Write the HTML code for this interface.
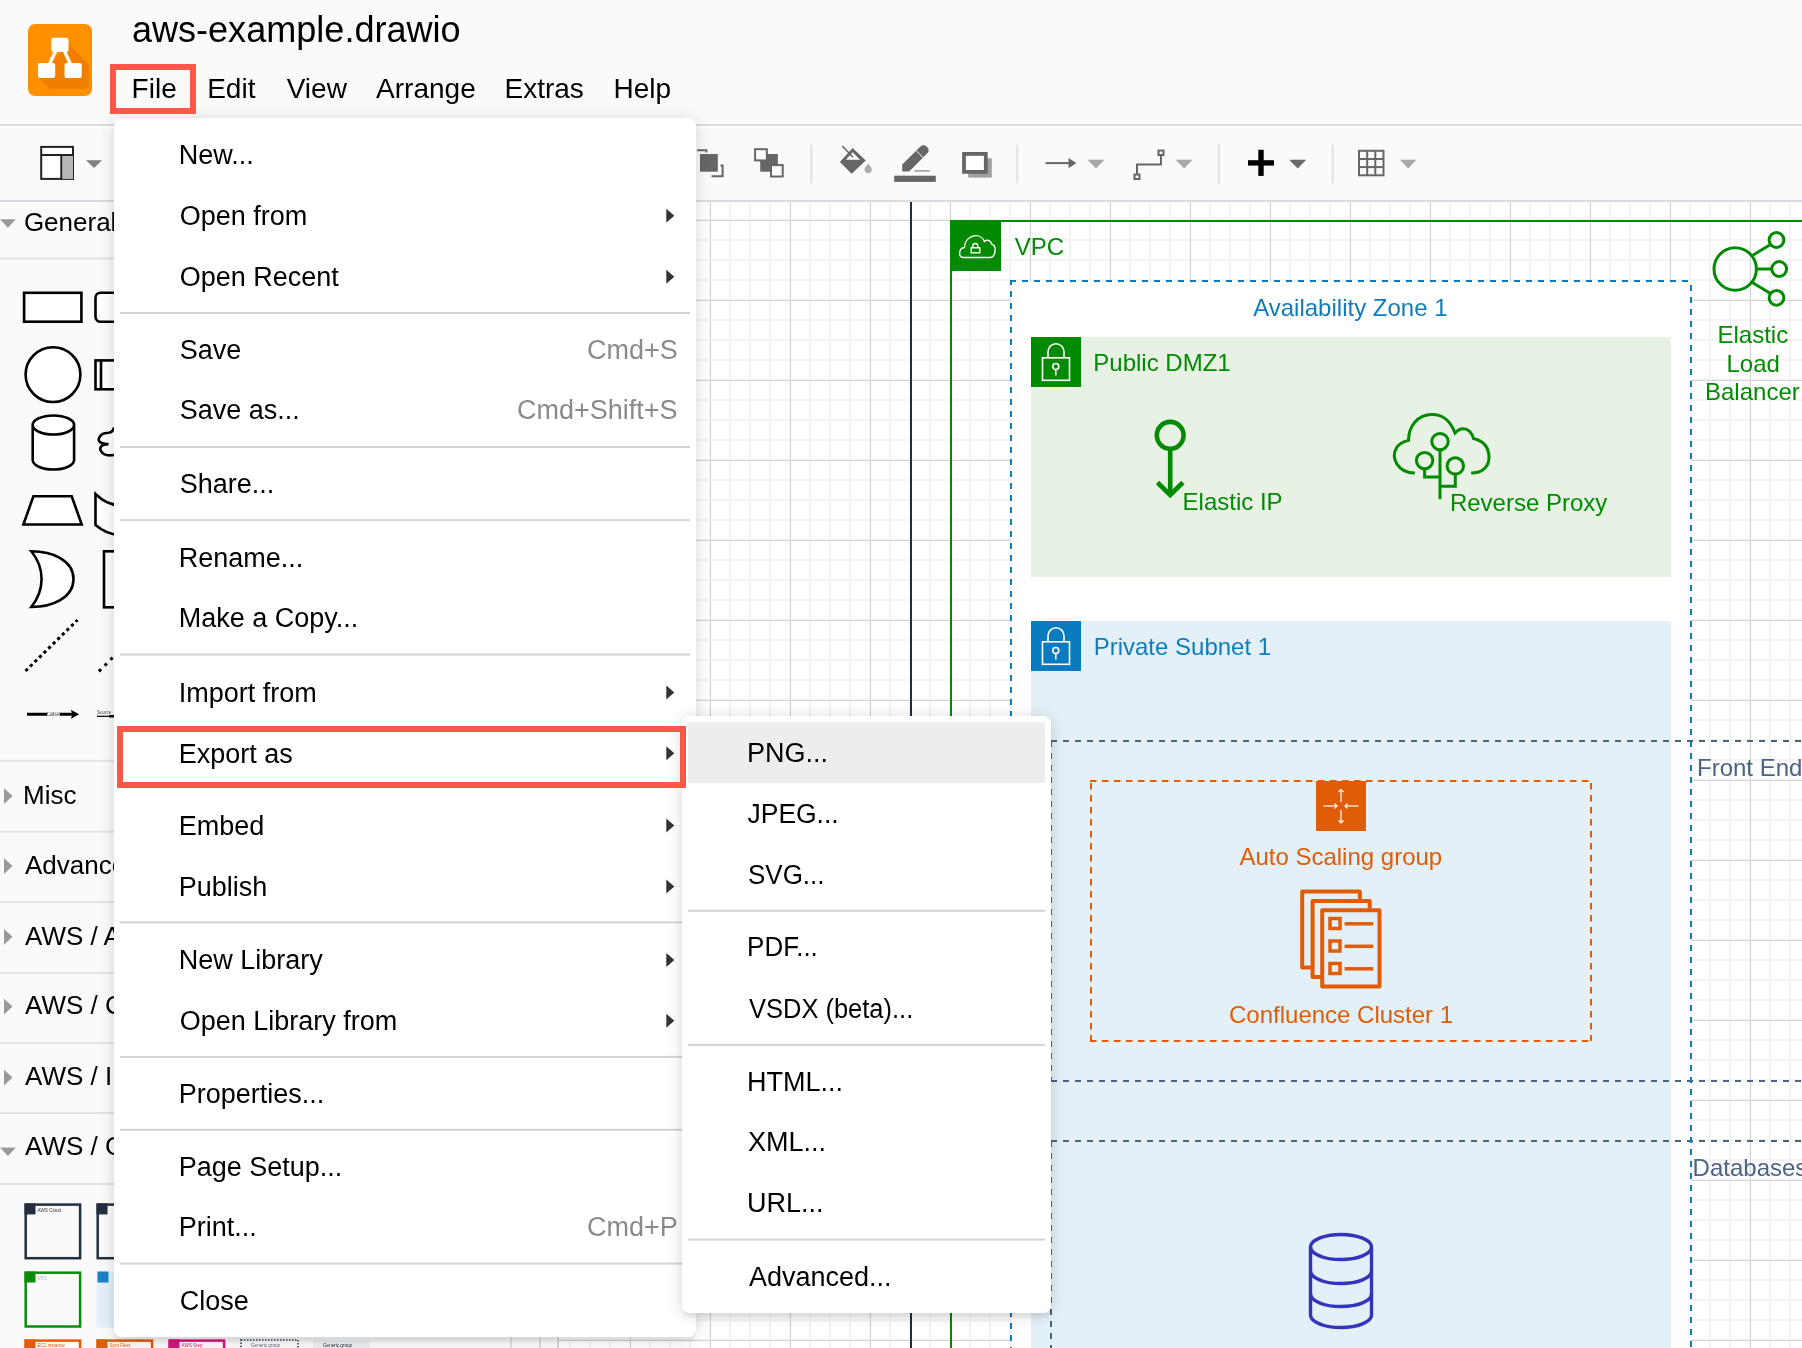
<!DOCTYPE html><html><head><meta charset="utf-8"><style>
*{margin:0;padding:0;box-sizing:border-box}
html,body{width:1802px;height:1348px;overflow:hidden;background:#fff}
body{position:relative;font-family:"Liberation Sans",sans-serif}
.L{position:absolute;overflow:hidden;will-change:transform}
svg{display:block;font-family:"Liberation Sans",sans-serif}
</style></head><body><div class="L" style="left:559px;top:202px;width:1243px;height:1146px;"><svg width="1243" height="1146" viewBox="559 202 1243 1146"><rect x="559" y="202" width="1243" height="1146" fill="#fff"/><defs>
<pattern id="gmin" patternUnits="userSpaceOnUse" x="0" y="0" width="20" height="20">
<rect x="9" y="0" width="2" height="20" fill="#f4f4f4"/>
<rect x="0" y="19" width="20" height="2" fill="#f4f4f4"/><rect x="0" y="-1" width="20" height="2" fill="#f4f4f4"/>
</pattern>
<pattern id="gmaj" patternUnits="userSpaceOnUse" x="0" y="0" width="80" height="80">
<rect x="70" y="0" width="1" height="80" fill="#d3d3d3"/>
<rect x="0" y="60" width="80" height="1" fill="#d3d3d3"/>
</pattern>
</defs><rect x="559" y="202" width="1243" height="1146" fill="url(#gmin)"/><rect x="559" y="202" width="1243" height="1146" fill="url(#gmaj)"/><rect x="910" y="202" width="2" height="1146" fill="#1f2d3d"/><rect x="951" y="221" width="1000" height="1200" fill="none" stroke="#038a03" stroke-width="2"/><rect x="950" y="220" width="51" height="51" fill="#038a03"/><g fill="none" stroke="#fff" stroke-width="1.4"><path d="M963,257.5 C958,257.5 958.5,248 964.5,247.5 C964.5,236 979.5,231 984.5,241.5 C987,239 991,240.5 991.5,244 C997,245.5 996,257.5 989.5,257.5 Z"/><rect x="971.2" y="247.8" width="8.6" height="5" /><path d="M972.8,247.8 v-1.8 a2.5,2.5 0 0 1 5,0 v1.8"/></g><text x="1014.70" y="255.10" font-size="24" fill="#038a03" >VPC</text><rect x="1011" y="281" width="680" height="1100" fill="#fff"/><g stroke="#0f7cbb" stroke-width="2" stroke-dasharray="6 6" fill="none"><line x1="1010" y1="281" x2="1692" y2="281"/><line x1="1011" y1="281" x2="1011" y2="1348" stroke-dashoffset="2"/></g><text x="1253.20" y="316.20" font-size="24" fill="#0f7cbb" >Availability Zone 1</text><rect x="1031" y="337" width="640" height="240" fill="#e7f2e5"/><rect x="1031" y="337" width="50" height="50" fill="#038a03"/><g fill="none" stroke="#fff" stroke-width="1.6"><rect x="1042.5" y="357.8" width="27" height="22.5"/><path d="M1048,357.8 v-6 a8,8 0 0 1 16,0 v6"/><circle cx="1055.8" cy="366.5" r="3"/><line x1="1055.8" y1="369.5" x2="1055.8" y2="375.5"/></g><text x="1093.30" y="370.80" font-size="24" fill="#038a03" >Public DMZ1</text><g fill="none" stroke="#038a03" stroke-width="4.6"><circle cx="1170.2" cy="435.3" r="13.4"/><line x1="1170.2" y1="449" x2="1170.2" y2="493"/><polyline points="1157.5,482.5 1170.2,495 1182.9,482.5"/></g><text x="1182.60" y="509.80" font-size="24" fill="#038a03" >Elastic IP</text><g fill="none" stroke="#038a03" stroke-width="3"><path d="M1414.9,473 C1398,473 1390,458 1397,447 C1400,442.5 1404,441.5 1408.6,440.3 C1408.5,426 1418,414.5 1432,414.5 C1443,414.5 1450,420 1455,433 C1462,425 1471,429 1473.5,438.5 C1484,441 1489,448 1489,457.5 C1489,467 1482,473 1471.2,473"/><circle cx="1440" cy="441.6" r="8.2"/><circle cx="1424.6" cy="460.6" r="8.2"/><circle cx="1455.3" cy="465.9" r="8.2"/><polyline points="1440,449.8 1440,499.2"/><polyline points="1424.6,468.8 1424.6,477 1440,477"/><polyline points="1455.3,474.1 1455.3,486.3 1440,486.3"/></g><text x="1449.90" y="510.50" font-size="24" fill="#038a03" >Reverse Proxy</text><g fill="none" stroke="#038a03" stroke-width="3"><circle cx="1735.2" cy="269" r="21.2"/><circle cx="1776.5" cy="240" r="7.4"/><circle cx="1779.2" cy="269" r="7.4"/><circle cx="1776.5" cy="297.8" r="7.4"/><line x1="1751.5" y1="256" x2="1770.5" y2="244.5"/><line x1="1756.4" y1="269" x2="1771.8" y2="269"/><line x1="1751.5" y1="282" x2="1770.5" y2="293.5"/></g><text x="1717.50" y="342.60" font-size="24" fill="#038a03" >Elastic</text><text x="1726.50" y="371.60" font-size="24" fill="#038a03" >Load</text><text x="1705.00" y="400.00" font-size="24" fill="#038a03" >Balancer</text><rect x="1031" y="621" width="640" height="800" fill="#e3f0f8"/><rect x="1031" y="621" width="50" height="50" fill="#0a7bbf"/><g fill="none" stroke="#fff" stroke-width="1.6"><rect x="1042.5" y="641.8" width="27" height="22.5"/><path d="M1048,641.8 v-6 a8,8 0 0 1 16,0 v6"/><circle cx="1055.8" cy="650.5" r="3"/><line x1="1055.8" y1="653.5" x2="1055.8" y2="659.5"/></g><text x="1093.70" y="655.00" font-size="24" fill="#0f7cbb" >Private Subnet 1</text><g stroke="#4b6384" stroke-width="2" stroke-dasharray="6 6" fill="none"><line x1="1051" y1="741" x2="1802" y2="741"/><line x1="1051" y1="1081" x2="1802" y2="1081"/><line x1="1051" y1="1141" x2="1802" y2="1141"/><line x1="1051" y1="741" x2="1051" y2="1081"/><line x1="1051" y1="1141" x2="1051" y2="1348"/></g><text x="1697.00" y="776.00" font-size="24" fill="#4b6384" >Front End</text><text x="1692.60" y="1176.00" font-size="24" fill="#4b6384" >Databases</text><line x1="1691" y1="281" x2="1691" y2="1348" stroke="#0f7cbb" stroke-width="2" stroke-dasharray="6 6" stroke-dashoffset="8"/><g stroke="#e05c06" stroke-width="2" stroke-dasharray="6.5 5.5" fill="none"><line x1="1090" y1="781" x2="1592" y2="781"/><line x1="1090" y1="1041" x2="1592" y2="1041"/><line x1="1091" y1="781" x2="1091" y2="1041" stroke-dashoffset="10"/><line x1="1591" y1="781" x2="1591" y2="1041" stroke-dashoffset="10"/></g><rect x="1316" y="781" width="50" height="50" fill="#e05c06"/><g stroke="#fff" stroke-width="1.2" fill="none"><line x1="1341" y1="789.5" x2="1341" y2="802"/><polyline points="1338.5,792 1341,789.5 1343.5,792"/><line x1="1341" y1="810" x2="1341" y2="823"/><polyline points="1338.5,820.5 1341,823 1343.5,820.5"/><line x1="1323.5" y1="806" x2="1337" y2="806"/><polyline points="1334.5,803.5 1337,806 1334.5,808.5"/><line x1="1358.5" y1="806" x2="1345" y2="806"/><polyline points="1347.5,803.5 1345,806 1347.5,808.5"/></g><text x="1239.40" y="864.60" font-size="24" fill="#e05c06" >Auto Scaling group</text><g fill="#e3f0f8" stroke="#e05c06" stroke-width="4" stroke-linejoin="round"><path d="M1359.9,900.9 V891.6 H1302.2 V967.4 H1312.6"/><path d="M1369.7,910.3 V900.9 H1312.6 V977 H1322.2"/><rect x="1322.2" y="910.3" width="57.3" height="76.1"/></g><g fill="none" stroke="#e05c06" stroke-width="3.5"><rect x="1330" y="918.5" width="10" height="10"/><rect x="1330" y="941" width="10" height="10"/><rect x="1330" y="963.5" width="10" height="10"/></g><g stroke="#e05c06" stroke-width="3.5"><line x1="1344.6" y1="923.8" x2="1373.3" y2="923.8"/><line x1="1344.6" y1="946.3" x2="1373.3" y2="946.3"/><line x1="1344.6" y1="968.8" x2="1373.3" y2="968.8"/></g><text x="1229.00" y="1022.50" font-size="24" fill="#e05c06" >Confluence Cluster 1</text><g fill="none" stroke="#3334b9" stroke-width="3.4"><ellipse cx="1341" cy="1247" rx="30.5" ry="12.5"/><path d="M1310.5,1247 V1315 A30.5,12.5 0 0 0 1371.5,1315 V1247"/><path d="M1310.5,1271 A30.5,12.5 0 0 0 1371.5,1271"/><path d="M1310.5,1294 A30.5,12.5 0 0 0 1371.5,1294"/></g></svg></div><div class="L" style="left:0px;top:0px;width:1802px;height:202px;"><svg width="1802" height="202" viewBox="0 0 1802 202"><rect x="0" y="0" width="1802" height="202" fill="#fafafa"/><rect x="0" y="124" width="1802" height="2" fill="#dadce0"/><rect x="0" y="126" width="1802" height="2" fill="#ffffff"/><rect x="0" y="200" width="1802" height="2" fill="#dadce0"/><rect x="28" y="24" width="64" height="72" rx="7" fill="#ff9100"/><path d="M68.5,44 L88.7,64 V85 A4,4 0 0 1 84.7,89 H50 L38,77 Z" fill="#f07f00"/><g fill="#fff"><rect x="51.4" y="37.7" width="17.1" height="14.3" rx="2"/><rect x="38" y="63" width="17.2" height="15" rx="2"/><rect x="64.5" y="63" width="17.2" height="15" rx="2"/><path d="M53.7,51 L57.6,51 L51.4,64 L47.7,64 Z"/><path d="M62.6,51 L66.3,51 L72.3,64 L68.6,64 Z"/></g><text x="131.90" y="41.60" font-size="36" fill="#000" textLength="328.78" lengthAdjust="spacingAndGlyphs" >aws-example.drawio</text><text x="131.60" y="98.10" font-size="28" fill="#000" >File</text><text x="207.20" y="98.10" font-size="28" fill="#000" >Edit</text><text x="286.70" y="98.10" font-size="28" fill="#000" >View</text><text x="376.10" y="98.10" font-size="28" fill="#000" >Arrange</text><text x="504.50" y="98.10" font-size="28" fill="#000" >Extras</text><text x="613.50" y="98.10" font-size="28" fill="#000" >Help</text><g><rect x="41.2" y="146.9" width="31.8" height="32" fill="#fff" stroke="#222" stroke-width="2"/><rect x="62.3" y="156" width="10.7" height="22.9" fill="#b8b8b8"/><line x1="41.2" y1="155" x2="73" y2="155" stroke="#222" stroke-width="2"/><line x1="61.3" y1="155" x2="61.3" y2="179" stroke="#222" stroke-width="2"/></g><polygon points="86,160.3 102,160.3 94.0,168" fill="#808080"/><g fill="none" stroke="#666" stroke-width="2"><polyline points="697,150.2 706.4,150.2 706.4,152.5"/><polyline points="711.5,176.2 722.6,176.2 722.6,165.4 720.5,165.4"/></g><rect x="700" y="154" width="17.8" height="17.7" fill="#666"/><rect x="760.2" y="154" width="17.7" height="17.7" fill="#666"/><rect x="755.1" y="149.2" width="11.7" height="11.2" fill="#fff" stroke="#666" stroke-width="2"/><rect x="771" y="165.1" width="11.7" height="11.4" fill="#fff" stroke="#666" stroke-width="2"/><rect x="810.4" y="144.5" width="2" height="39" fill="#e2e2e2"/><rect x="1016.2" y="144.5" width="2" height="39" fill="#e2e2e2"/><rect x="1217.8" y="144.5" width="2" height="39" fill="#e2e2e2"/><rect x="1331.8" y="144.5" width="2" height="39" fill="#e2e2e2"/><g><polygon points="839.9,162 852.6,147.9 865.8,160.6 851.7,173.8" fill="#666"/><polygon points="846,159.8 852.6,152.3 860,159.8" fill="#fff"/><line x1="842.3" y1="146" x2="853.1" y2="157.3" stroke="#666" stroke-width="1.6"/><circle cx="868.2" cy="169.6" r="3.6" fill="#aaa"/><polygon points="865.2,168 868.2,163.5 871.2,168" fill="#aaa"/></g><g><path d="M902.2,171.5 L902.2,164.5 L920.5,146.5 A4,4 0 0 1 926.5,146.5 L927.3,147.3 A4,4 0 0 1 927.3,153.3 L909.2,171.5 Z" fill="#666"/><line x1="916.5" y1="151" x2="923.5" y2="158" stroke="#fafafa" stroke-width="1"/><rect x="894.2" y="175.7" width="41.6" height="6.2" fill="#666"/><rect x="914.4" y="170" width="15.4" height="1.8" fill="#aaa"/></g><rect x="968.2" y="158.3" width="23.6" height="19.3" fill="#a0a0a0"/><rect x="964" y="153.9" width="21.8" height="18" fill="#fff" stroke="#666" stroke-width="3.8"/><g><line x1="1045.6" y1="163.1" x2="1074" y2="163.1" stroke="#666" stroke-width="2"/><polygon points="1068.5,158 1076.4,163.1 1068.5,168.2" fill="#666"/></g><polygon points="1087.6,159.8 1104.4,159.8 1096.0,168.5" fill="#a8a8a8"/><g fill="none" stroke="#666" stroke-width="2"><polyline points="1137,174 1137,164.4 1161,164.4 1161,155"/><rect x="1134.5" y="174.5" width="5" height="4.5"/><rect x="1158.5" y="150.5" width="5" height="4.5"/></g><polygon points="1175.7,159.8 1192.5,159.8 1184.1,168.5" fill="#a8a8a8"/><g fill="#000"><rect x="1248" y="160.2" width="26" height="5.4"/><rect x="1258.3" y="149.8" width="5.4" height="26.1"/></g><polygon points="1289.2,159.8 1306.2,159.8 1297.7,168.5" fill="#6a6a6a"/><g fill="none" stroke="#666" stroke-width="2"><rect x="1359" y="150.8" width="24.5" height="24.5"/><line x1="1367.2" y1="150.8" x2="1367.2" y2="175.3"/><line x1="1359" y1="159.0" x2="1383.5" y2="159.0"/><line x1="1375.3" y1="150.8" x2="1375.3" y2="175.3"/><line x1="1359" y1="167.1" x2="1383.5" y2="167.1"/></g><polygon points="1400,159.8 1416.3,159.8 1408.15,168.5" fill="#a8a8a8"/></svg></div><div class="L" style="left:0px;top:202px;width:559px;height:1146px;"><svg width="559" height="1146" viewBox="0 202 559 1146"><rect x="0" y="202" width="559" height="1146" fill="#fafafa"/><rect x="510" y="202" width="2" height="1146" fill="#e0e0e0"/><rect x="539" y="202" width="2" height="1146" fill="#dcdcdc"/><rect x="557" y="202" width="2" height="1146" fill="#d6d6d6"/><rect x="0" y="257.4" width="510" height="2" fill="#e3e3e3"/><rect x="0" y="759.8" width="510" height="2" fill="#e3e3e3"/><rect x="0" y="830.6" width="510" height="2" fill="#e3e3e3"/><rect x="0" y="901.0" width="510" height="2" fill="#e3e3e3"/><rect x="0" y="972.0" width="510" height="2" fill="#e3e3e3"/><rect x="0" y="1042.0" width="510" height="2" fill="#e3e3e3"/><rect x="0" y="1112.0" width="510" height="2" fill="#e3e3e3"/><rect x="0" y="1183.0" width="510" height="2" fill="#e3e3e3"/><polygon points="0,219.3 15.8,219.3 7.9,227.7" fill="#999"/><text x="23.90" y="231.30" font-size="26" fill="#000" >General</text><polygon points="4,788.2 12.5,796.0 4,803.9000000000001" fill="#999"/><text x="23.00" y="803.70" font-size="26" fill="#000" >Misc</text><polygon points="4,858.2 12.5,866.0 4,873.9000000000001" fill="#999"/><text x="25.00" y="873.70" font-size="26" fill="#000" >Advanced</text><polygon points="4,929.0 12.5,936.8 4,944.7" fill="#999"/><text x="25.00" y="944.50" font-size="26" fill="#000" >AWS / Analytics</text><polygon points="4,998.7 12.5,1006.5 4,1014.4000000000001" fill="#999"/><text x="25.00" y="1014.20" font-size="26" fill="#000" >AWS / Compute</text><polygon points="4,1069.7 12.5,1077.5 4,1085.4" fill="#999"/><text x="25.00" y="1085.20" font-size="26" fill="#000" >AWS / Illustrations</text><polygon points="0,1147.5 15.8,1147.5 7.9,1155.9" fill="#999"/><text x="25.00" y="1155.40" font-size="26" fill="#000" >AWS / Groups</text><g fill="#fff" stroke="#000" stroke-width="2.6"><rect x="24.1" y="292.8" width="57.3" height="28.9"/><rect x="95.5" y="292.8" width="57" height="28.9" rx="5"/><circle cx="53" cy="374.6" r="27.4"/><rect x="95.5" y="360.4" width="57" height="28.9"/><line x1="101" y1="360.4" x2="101" y2="389.3"/><path d="M32.7,425 V460 A20.7,9.5 0 0 0 74.1,460 V425 A20.7,9.5 0 0 0 32.7,425 A20.7,9.5 0 0 0 74.1,425"/><path d="M114,427.5 C113,432 110,433 107,433 C100,433 97,440 100,442 C102,444 106,444 108.5,444.3 C101,444.5 99,448 101,451 C103,455 108,456 114,455"/><polygon points="23.4,524.5 33.4,496.3 71.7,496.3 81.7,524.5"/><path d="M95.5,494 Q110,508 124,504 Q138,500 152.5,494 V525 Q138,531 124,534 Q110,537 95.5,525 Z"/><path d="M31.3,551.3 C52,551.3 73.5,560 73.5,579 C73.5,598 52,607 31.3,607 C45,590 45,568 31.3,551.3 Z"/><rect x="104" y="551.3" width="40" height="56"/></g><line x1="25.5" y1="671" x2="77.5" y2="620" stroke="#000" stroke-width="3" stroke-dasharray="3.2 3.2"/><line x1="98.9" y1="671.4" x2="150" y2="620" stroke="#000" stroke-width="3" stroke-dasharray="3 5.2"/><g><line x1="27" y1="714.3" x2="75" y2="714.3" stroke="#000" stroke-width="3"/><polygon points="70.8,709.8 79.2,714.3 70.8,718.8 72.5,714.3" fill="#000"/><rect x="47" y="712.6" width="13" height="3.4" fill="#fafafa"/><text x="47" y="716.3" font-size="5.5" fill="#444">Label</text></g><g><line x1="97" y1="716.3" x2="109" y2="716.3" stroke="#000" stroke-width="1.2"/><line x1="109" y1="716.3" x2="150" y2="716.3" stroke="#000" stroke-width="2.6"/><text x="97" y="714" font-size="4.5" fill="#444">Source</text></g><g fill="none" stroke-width="2.5"><rect x="25.7" y="1204.6" width="54.4" height="53.6" stroke="#232f3e"/><rect x="97.7" y="1204.6" width="54.4" height="53.6" stroke="#232f3e"/><rect x="25.7" y="1272.7" width="54.4" height="53.8" stroke="#0b8a0b"/><rect x="25.7" y="1340.6" width="54.4" height="20" stroke="#e05c06"/><rect x="97.7" y="1340.6" width="54.4" height="20" stroke="#e05c06"/><rect x="169.7" y="1340.6" width="54.4" height="20" stroke="#d6157c"/></g><rect x="24.5" y="1203.4" width="11" height="11" fill="#232f3e"/><rect x="96.5" y="1203.4" width="11" height="11" fill="#232f3e"/><rect x="24.5" y="1271.5" width="11" height="11" fill="#0b8a0b"/><rect x="96.5" y="1271.5" width="57" height="56" fill="#e3f0f8"/><rect x="97.5" y="1271.5" width="11" height="11" fill="#1a83c5"/><rect x="24.5" y="1339.4" width="11" height="11" fill="#e05c06"/><rect x="96.5" y="1339.4" width="11" height="11" fill="#e05c06"/><rect x="168.5" y="1339.4" width="11" height="11" fill="#d6157c"/><rect x="241" y="1340" width="57" height="20" fill="none" stroke="#5a6c86" stroke-width="2" stroke-dasharray="1.5 1.5"/><rect x="313" y="1340" width="57" height="20" fill="#eceff1"/><text x="37.5" y="1212" font-size="4.6" fill="#333">AWS Cloud</text><text x="37.5" y="1280" font-size="4.6" fill="#aab7b8">VPC</text><text x="37.5" y="1347" font-size="4.6" fill="#e05c06">EC2 instance</text><text x="109.5" y="1347" font-size="4.6" fill="#e05c06">Spot Fleet</text><text x="181.5" y="1347" font-size="4.6" fill="#d6157c">AWS Step</text><text x="251" y="1347" font-size="4.6" fill="#5a6c86">Generic group</text><text x="323" y="1347" font-size="4.6" fill="#232f3e">Generic group</text></svg></div><div class="L" style="left:114px;top:118px;width:582px;height:1219px;border-radius:8px;box-shadow:0 6px 3px -1px rgba(0,0,0,0.05),0 2px 16px rgba(0,0,0,0.16)"><svg width="582" height="1219" viewBox="114 118 582 1219"><rect x="114" y="118" width="582" height="1219" fill="#fff"/><text x="178.70" y="164.00" font-size="27" fill="#000" >New...</text><text x="179.70" y="225.00" font-size="27" fill="#000" >Open from</text><polygon points="666.3,208.8 674.3,215.8 666.3,222.8" fill="#333"/><text x="179.70" y="286.00" font-size="27" fill="#000" >Open Recent</text><polygon points="666.3,269.8 674.3,276.8 666.3,283.8" fill="#333"/><rect x="120" y="312.0" width="570" height="2" fill="#d4d4d4"/><text x="179.70" y="358.80" font-size="27" fill="#000" >Save</text><text x="587.00" y="358.80" font-size="27" fill="#8a8a8a" >Cmd+S</text><text x="179.70" y="419.40" font-size="27" fill="#000" >Save as...</text><text x="517.00" y="419.40" font-size="27" fill="#8a8a8a" >Cmd+Shift+S</text><rect x="120" y="446.0" width="570" height="2" fill="#d4d4d4"/><text x="179.70" y="492.90" font-size="27" fill="#000" >Share...</text><rect x="120" y="519.1" width="570" height="2" fill="#d4d4d4"/><text x="178.70" y="566.60" font-size="27" fill="#000" >Rename...</text><text x="178.70" y="627.30" font-size="27" fill="#000" >Make a Copy...</text><rect x="120" y="653.5" width="570" height="2" fill="#d4d4d4"/><text x="178.70" y="701.60" font-size="27" fill="#000" >Import from</text><polygon points="666.3,685.4 674.3,692.4 666.3,699.4" fill="#333"/><text x="178.70" y="762.50" font-size="27" fill="#000" >Export as</text><polygon points="666.3,746.3 674.3,753.3 666.3,760.3" fill="#333"/><text x="178.70" y="834.80" font-size="27" fill="#000" >Embed</text><polygon points="666.3,818.6 674.3,825.6 666.3,832.6" fill="#333"/><text x="178.70" y="895.70" font-size="27" fill="#000" >Publish</text><polygon points="666.3,879.5 674.3,886.5 666.3,893.5" fill="#333"/><rect x="120" y="921.4" width="570" height="2" fill="#d4d4d4"/><text x="178.70" y="969.30" font-size="27" fill="#000" >New Library</text><polygon points="666.3,953.1 674.3,960.1 666.3,967.1" fill="#333"/><text x="179.70" y="1029.90" font-size="27" fill="#000" >Open Library from</text><polygon points="666.3,1013.7 674.3,1020.7 666.3,1027.7" fill="#333"/><rect x="120" y="1055.9" width="570" height="2" fill="#d4d4d4"/><text x="178.70" y="1102.50" font-size="27" fill="#000" >Properties...</text><rect x="120" y="1128.8" width="570" height="2" fill="#d4d4d4"/><text x="178.70" y="1176.40" font-size="27" fill="#000" >Page Setup...</text><text x="178.70" y="1236.30" font-size="27" fill="#000" >Print...</text><text x="587.00" y="1236.30" font-size="27" fill="#8a8a8a" >Cmd+P</text><rect x="120" y="1262.6" width="570" height="2" fill="#d4d4d4"/><text x="179.70" y="1310.30" font-size="27" fill="#000" >Close</text></svg></div><div class="L" style="left:682px;top:716px;width:369px;height:597px;border-radius:8px;box-shadow:0 6px 3px -1px rgba(0,0,0,0.05),0 2px 16px rgba(0,0,0,0.16)"><svg width="369" height="597" viewBox="682 716 369 597"><rect x="682" y="716" width="369" height="597" fill="#fff"/><rect x="688" y="722" width="357" height="61" fill="#ededed"/><text x="747.00" y="761.90" font-size="27" fill="#000" >PNG...</text><text x="747.52" y="823.00" font-size="27" fill="#000" textLength="91.17" lengthAdjust="spacingAndGlyphs" >JPEG...</text><text x="748.04" y="883.60" font-size="27" fill="#000" textLength="76.39" lengthAdjust="spacingAndGlyphs" >SVG...</text><rect x="688" y="909.8" width="357" height="2" fill="#d4d4d4"/><text x="747.08" y="956.40" font-size="27" fill="#000" textLength="70.75" lengthAdjust="spacingAndGlyphs" >PDF...</text><text x="749.00" y="1018.40" font-size="27" fill="#000" textLength="164.25" lengthAdjust="spacingAndGlyphs" >VSDX (beta)...</text><rect x="688" y="1043.9" width="357" height="2" fill="#d4d4d4"/><text x="747.00" y="1091.10" font-size="27" fill="#000" >HTML...</text><text x="748.00" y="1151.30" font-size="27" fill="#000" >XML...</text><text x="747.00" y="1211.80" font-size="27" fill="#000" >URL...</text><rect x="688" y="1238.6" width="357" height="2" fill="#d4d4d4"/><text x="749.00" y="1285.80" font-size="27" fill="#000" >Advanced...</text></svg></div><div style="position:absolute;left:110px;top:64px;width:86px;height:50px;border:6.5px solid #fd5749"></div><div style="position:absolute;left:117px;top:726px;width:569px;height:62px;border:6px solid #fd5749"></div></body></html>
